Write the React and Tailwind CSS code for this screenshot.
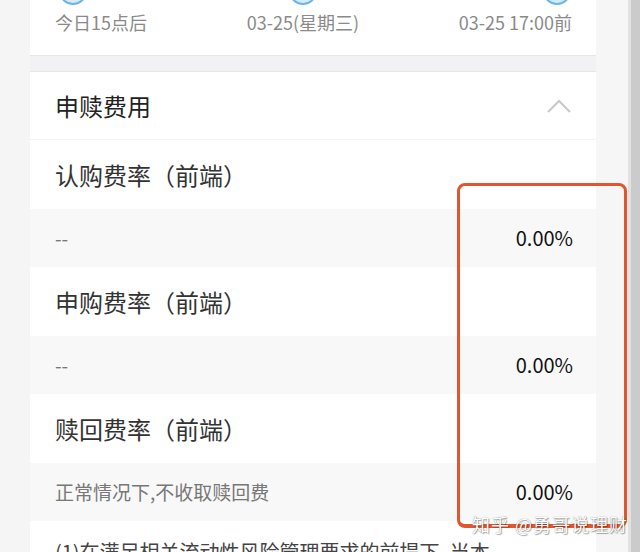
const steps = [
  { label: '今日15点后', align: 'items-start', circle: 'ml-[4px]' },
  { label: '03-25(星期三)', align: 'items-center', circle: '' },
  { label: '03-25 17:00前', align: 'items-end', circle: 'mr-[1px]' },
]

const fees = [
  { title: '认购费率（前端）', note: '--', value: '0.00%' },
  { title: '申购费率（前端）', note: '--', value: '0.00%' },
  { title: '赎回费率（前端）', note: '正常情况下,不收取赎回费', value: '0.00%' },
]

function ChevronUp() {
  return (
    <svg width="24" height="14" viewBox="0 0 24 14" fill="none">
      <polyline points="1,13 12,2 23,13" stroke="#c9c9c9" strokeWidth="2" />
    </svg>
  )
}

export default function App() {
  return (
    <div className="relative flex h-[552px] w-[640px] overflow-hidden bg-[#f5f5f5] font-['Noto_Sans_CJK_SC',sans-serif]">
      <div className="w-[30px] shrink-0" />
      <div className="flex w-[566px] shrink-0 flex-col bg-white">
        {/* steps */}
        <div className="flex h-[55px] shrink-0 justify-between px-[25px] pr-[24px]">
          {steps.map((s) => (
            <div key={s.label} className={`flex flex-col ${s.align}`}>
              <div className={`mt-[-23px] h-[28px] w-[28px] shrink-0 rounded-full border-2 border-[#6fb4e8] bg-[#d6ebfa] ${s.circle}`} />
              <span className="mt-[5px] text-[18px] leading-[24px] text-[#8a8a8a]">
                {s.label}
              </span>
            </div>
          ))}
        </div>
        <div className="h-[17px] shrink-0 border-y border-[#e7e7eb] bg-[#f2f2f5]" />

        {/* header */}
        <div className="flex h-[68px] shrink-0 items-center justify-between border-b border-[#f3f3f3] px-[25px]">
          <span className="text-[24px] text-[#222]">申赎费用</span>
          <ChevronUp />
        </div>

        {fees.map((f) => (
          <div key={f.title} className="flex shrink-0 flex-col">
            <div className="flex h-[69px] items-center px-[25px] text-[24px] text-[#333]">
              {f.title}
            </div>
            <div className="flex h-[58px] items-center justify-between bg-[#f8f8f8] pl-[25px] pr-[23px]">
              <span className="text-[19px] text-[#777]">{f.note}</span>
              <span className="text-[20px] text-[#111]">{f.value}</span>
            </div>
          </div>
        ))}

        <div className="shrink-0 whitespace-nowrap px-[25px] pt-[17px] text-[20px] leading-[28px] text-[#444]">
          (1)在满足相关流动性风险管理要求的前提下, 当本
        </div>
      </div>
      <div className="w-[32px] shrink-0 bg-[#f6f6f6]" />
      <div className="w-[12px] shrink-0 border-l-[3px] border-[#e2e2e2] bg-[#cbcbcb]" />

      {/* annotation */}
      <div className="absolute left-[457px] top-[183px] h-[345px] w-[170px] rounded-[8px] border-[3px] border-b-[4px] border-[#e2552e]" />
      <div className="absolute left-[472px] top-[511px] text-[18px] leading-[26px] tracking-[1px] text-white [text-shadow:0_0_1px_rgba(0,0,0,0.5),1px_1px_1px_rgba(0,0,0,0.3)]">
        知乎 @勇哥说理财
      </div>
    </div>
  )
}
